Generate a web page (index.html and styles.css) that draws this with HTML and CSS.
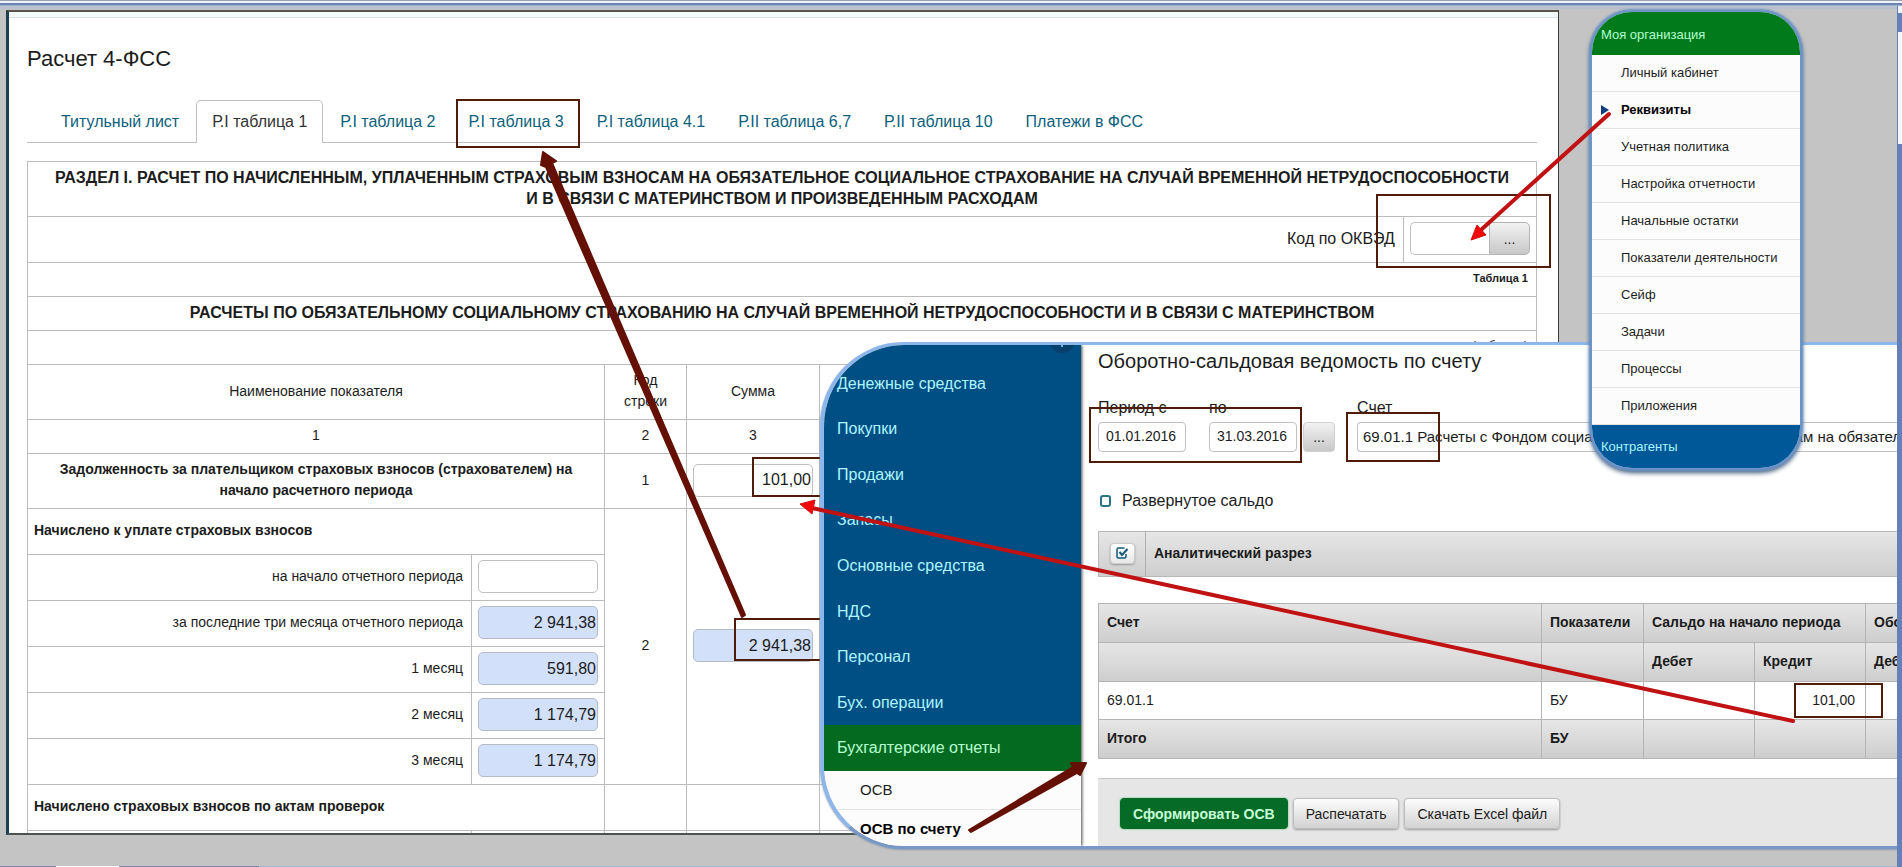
FILE: index.html
```html
<!DOCTYPE html>
<html lang="ru">
<head>
<meta charset="utf-8">
<title>Расчет 4-ФСС</title>
<link rel="stylesheet" href="styles.css">
</head>
<body>
<div class="desktop">
  <div class="top-strip"></div>
  <div class="scrollbar"><span class="scroll-up"></span><span class="scroll-thumb"></span></div>
  <div class="bottom-strip"></div>

  <main class="report">
    <h1 class="report-title">Расчет 4-ФСС</h1>
    <nav class="tabs">
      <a class="tab" href="#t0">Титульный лист</a>
      <a class="tab tab-active" href="#t1" aria-current="page">Р.I таблица 1</a>
      <a class="tab" href="#t2">Р.I таблица 2</a>
      <a class="tab" href="#t3">Р.I таблица 3</a>
      <a class="tab" href="#t4">Р.I таблица 4.1</a>
      <a class="tab" href="#t6">Р.II таблица 6,7</a>
      <a class="tab" href="#t10">Р.II таблица 10</a>
      <a class="tab" href="#pay">Платежи в ФСС</a>
    </nav>
    <table class="form-table">
      <colgroup><col class="c-name"><col class="c-value"><col class="c-code"><col class="c-value"><col><col class="c-value"></colgroup>
      <tbody>
      <tr class="row-double"><th class="heading" colspan="6">РАЗДЕЛ I. РАСЧЕТ ПО НАЧИСЛЕННЫМ, УПЛАЧЕННЫМ СТРАХОВЫМ ВЗНОСАМ НА ОБЯЗАТЕЛЬНОЕ СОЦИАЛЬНОЕ СТРАХОВАНИЕ НА СЛУЧАЙ ВРЕМЕННОЙ НЕТРУДОСПОСОБНОСТИ<br>И В СВЯЗИ С МАТЕРИНСТВОМ И ПРОИЗВЕДЕННЫМ РАСХОДАМ</th></tr>
      <tr class="row-field"><td class="okved-label" colspan="5"><label for="okved">Код по ОКВЭД</label></td>
        <td><div class="picker"><input class="field" id="okved" type="text"><button class="pick" type="button" aria-label="Выбрать код">...</button></div></td></tr>
      <tr class="row-line"><td class="note note-bold" colspan="6">Таблица 1</td></tr>
      <tr class="row-line"><th class="heading" colspan="6">РАСЧЕТЫ ПО ОБЯЗАТЕЛЬНОМУ СОЦИАЛЬНОМУ СТРАХОВАНИЮ НА СЛУЧАЙ ВРЕМЕННОЙ НЕТРУДОСПОСОБНОСТИ И В СВЯЗИ С МАТЕРИНСТВОМ</th></tr>
      <tr class="row-line"><td class="note" colspan="6">(руб. коп.)</td></tr>
      <tr class="row-double"><td class="center" colspan="2">Наименование показателя</td><td class="center">Код строки</td><td class="center">Сумма</td><td colspan="2"></td></tr>
      <tr class="row-line"><td class="center" colspan="2">1</td><td class="center">2</td><td class="center">3</td><td colspan="2"></td></tr>
      <tr class="row-double"><th class="center" colspan="2">Задолженность за плательщиком страховых взносов (страхователем) на<br>начало расчетного периода</th><td class="center">1</td><td><input class="field" type="text" value="101,00" aria-label="Задолженность"></td><td colspan="2"></td></tr>
      <tr class="row-field"><th class="left" colspan="2">Начислено к уплате страховых взносов</th><td class="center" rowspan="6">2</td><td rowspan="6"><input class="field computed" type="text" value="2 941,38" readonly aria-label="Начислено"></td><td colspan="2" rowspan="6"></td></tr>
      <tr class="row-field"><td class="right"><label for="start">на начало отчетного периода</label></td><td><input class="field" id="start" type="text"></td></tr>
      <tr class="row-field"><td class="right"><label for="three">за последние три месяца отчетного периода</label></td><td><input class="field computed" id="three" type="text" value="2 941,38" readonly></td></tr>
      <tr class="row-field"><td class="right"><label for="m1">1 месяц</label></td><td><input class="field computed" id="m1" type="text" value="591,80" readonly></td></tr>
      <tr class="row-field"><td class="right"><label for="m2">2 месяц</label></td><td><input class="field computed" id="m2" type="text" value="1 174,79" readonly></td></tr>
      <tr class="row-field"><td class="right"><label for="m3">3 месяц</label></td><td><input class="field computed" id="m3" type="text" value="1 174,79" readonly></td></tr>
      <tr class="row-field"><th class="left" colspan="2">Начислено страховых взносов по актам проверок</th><td></td><td></td><td colspan="2"></td></tr>
      <tr class="row-field"><td></td><td></td><td></td><td></td><td colspan="2"></td></tr>
      </tbody>
    </table>
  </main>

  <svg class="notes" aria-hidden="true">
    <g class="frame">
      <rect x="457" y="100" width="122" height="47"/>
      <rect x="1377" y="195" width="173" height="72"/>
      <rect x="753" y="458" width="90" height="38"/>
      <rect x="735" y="619" width="100" height="41"/>
    </g>
    <path class="brown" d="M543 152 L556 161 L552 163 L745 615 L742 617 L546 167 L541 165 Z"/>
  </svg>

  <section class="balance">
    <nav class="side">
      <span class="side-knob"></span>
      <div class="side-main">
        <a href="#money">Денежные средства</a>
        <a href="#buy">Покупки</a>
        <a href="#sell">Продажи</a>
        <a href="#stock">Запасы</a>
        <a href="#assets">Основные средства</a>
        <a href="#vat">НДС</a>
        <a href="#staff">Персонал</a>
        <a href="#ops">Бух. операции</a>
        <a class="side-current" href="#reports">Бухгалтерские отчеты</a>
      </div>
      <div class="side-sub">
        <a href="#osv">ОСВ</a>
        <a class="side-sub-current" href="#osv-account">ОСВ по счету</a>
      </div>
    </nav>
    <div class="content">
      <h2 class="content-title">Оборотно-сальдовая ведомость по счету</h2>
      <div class="filters">
        <div class="filter filter-date"><label for="from">Период с</label><input id="from" type="text" value="01.01.2016"></div>
        <div class="filter filter-date"><label for="to">по</label><input id="to" type="text" value="31.03.2016"></div>
        <button class="pick pick-period" type="button" aria-label="Выбрать период">...</button>
        <div class="filter filter-account"><label for="account">Счет</label><input id="account" type="text" value="69.01.1 Расчеты с Фондом социального страхования по взносам на обязательное социальное страхование"></div>
      </div>
      <div class="expand"><input id="expand" type="checkbox"><label for="expand">Развернутое сальдо</label></div>
      <div class="slice">
        <div class="slice-check"><button type="button" aria-label="Аналитический разрез"><svg width="13" height="12" viewBox="0 0 13 12"><path d="M10 7v2.500a1.500 1.500 0 0 1-1.500 1.500h-6A1.500 1.500 0 0 1 1 9.500v-7A1.500 1.500 0 0 1 2.500 1h6" fill="none" stroke="#125a78" stroke-width="1.500"/><path d="M3.500 5l2.500 3 5.500-6" fill="none" stroke="#125a78" stroke-width="2"/></svg></button></div>
        <strong>Аналитический разрез</strong>
      </div>
      <div class="ledger-wrap">
      <table class="ledger">
        <colgroup><col class="l-account"><col class="l-kind"><col class="l-sum"><col class="l-sum"><col class="l-sum"></colgroup>
        <thead>
        <tr><th>Счет</th><th>Показатели</th><th colspan="2">Сальдо на начало периода</th><th>Обороты</th></tr>
        <tr><th></th><th></th><th>Дебет</th><th>Кредит</th><th>Дебет</th></tr>
        </thead>
        <tbody>
        <tr class="plain"><td>69.01.1</td><td>БУ</td><td></td><td class="amount">101,00</td><td></td></tr>
        <tr><th>Итого</th><th>БУ</th><th></th><th></th><th></th></tr>
        </tbody>
      </table>
      </div>
      <div class="actions">
        <button class="btn btn-primary" type="button">Сформировать ОСВ</button>
        <button class="btn" type="button">Распечатать</button>
        <button class="btn" type="button">Скачать Excel файл</button>
      </div>
    </div>
  </section>

  <nav class="org">
    <a class="org-head" href="#org">Моя организация</a>
    <a class="org-item" href="#cabinet">Личный кабинет</a>
    <a class="org-item org-current" href="#details">Реквизиты</a>
    <a class="org-item" href="#policy">Учетная политика</a>
    <a class="org-item" href="#setup">Настройка отчетности</a>
    <a class="org-item" href="#opening">Начальные остатки</a>
    <a class="org-item" href="#metrics">Показатели деятельности</a>
    <a class="org-item" href="#safe">Сейф</a>
    <a class="org-item" href="#tasks">Задачи</a>
    <a class="org-item" href="#processes">Процессы</a>
    <a class="org-item" href="#apps">Приложения</a>
    <a class="org-foot" href="#partners">Контрагенты</a>
  </nav>

  <svg class="notes" aria-hidden="true">
    <g class="frame">
      <rect x="1090" y="408" width="211" height="54"/>
      <rect x="1347" y="413" width="92" height="48"/>
      <rect x="1795" y="684" width="87" height="33"/>
    </g>
    <path class="red-line" d="M1609 114 L1482 229"/>
    <path class="red-head" d="M1471 240 L1477 225 L1486 235 Z"/>
    <path class="red-line" d="M1793 721 L812 508"/>
    <path class="red-head" d="M800 504 L815 500 L812 514 Z"/>
    <path class="brown" d="M969 830 L1073 767 L1071 763 L1086 763 L1080 775 L1077 773 L971 832 Z"/>
  </svg>
</div>
</body>
</html>
```
FILE: styles.css
```css
* { box-sizing: border-box; }
body { margin: 0; font-family: "Liberation Sans", Arial, sans-serif; color: #1c1c1c; }
a { text-decoration: none; color: inherit; }
input, button { font-family: inherit; color: inherit; }

.desktop { position: relative; height: 100vh; overflow: hidden; background: #c4c4c4; }
.top-strip { height: 9px; background: linear-gradient(#9aa2b2 0 1px, #eef3fa 1px 3px, #6d84b0 3px 5px, #9fb0cc 5px 6px, #b9c1cf 6px 9px); }
.bottom-strip { position: absolute; left: 0; right: 0; bottom: 0; height: 1px; background: linear-gradient(90deg, #7f88a8 0 56px, #fff 56px 119px, #7f88a8 119px 259px, #a3b8d8 259px); }
.scrollbar { position: absolute; z-index: 2; top: 6px; right: 0; bottom: 0; width: 5px; background: #6480b8; display: flex; flex-direction: column; gap: 19px; padding-left: 1px; }
.scroll-up { height: 7px; background: #eef4ff; }
.scroll-thumb { height: 112px; background: #f4f8ff; }

/* Report window */
.report { position: absolute; left: 6px; top: 10px; right: 343px; bottom: 32px; overflow: hidden; padding: 33px 21px 0 18px; background: linear-gradient(#f3f9fb 0 5px, #dde3e5 5px 6px, #fff 6px); border: solid #1d4052; border-width: 2px 1px 2px 3px; border-top-color: #55554a; border-right-color: #3c3c38; border-bottom-color: #4a5552; }
.report-title { margin: 0; font-size: 22px; line-height: 28px; font-weight: 400; }
.tabs { display: flex; gap: 1px; margin-top: 27px; padding-left: 18px; border-bottom: 1px solid #c0c0c0; font-size: 16px; line-height: 42px; }
.tab { color: #0d5f7c; padding: 0 15px; border: 1px solid transparent; border-bottom: 0; margin-bottom: -1px; }
.tab-active { color: #333; background: #fff; border-color: #c0c0c0; border-radius: 5px 5px 0 0; }

.form-table { width: 100%; margin-top: 18px; table-layout: fixed; border-collapse: collapse; font-size: 14px; line-height: 21px; }
.form-table td, .form-table th { border: 1px solid #bcbcbc; padding: 0 6px 2px; }
.c-name { width: 444px; }
.c-value { width: 133px; }
.c-code { width: 82px; }
.row-double { height: 55px; }
.row-field { height: 46px; }
.row-line { height: 34px; }
.form-table .heading { font-size: 16px; text-align: center; padding: 0 0 2px; white-space: nowrap; }
.center { text-align: center; }
.left { text-align: left; }
.right { text-align: right; }
.form-table .right { padding-right: 8px; }
.form-table .okved-label { text-align: right; padding-right: 8px; font-size: 16px; }
.form-table .note { text-align: right; font-size: 12px; padding-right: 8px; }
.form-table .note-bold { font-size: 11px; font-weight: 700; }
.field { display: block; width: 100%; height: 33px; padding: 0 1px; border: 1px solid #c0c0c0; border-radius: 5px; background: #fff; font-size: 16px; text-align: right; }
.computed { background: #d3e0fa; border-color: #b5bcc6; }
.picker { display: flex; }
.picker .field { flex: 1; min-width: 0; border-radius: 5px 0 0 5px; border-right: 0; }
.pick { padding: 0; border: 1px solid #b4b4b4; border-radius: 4px; background: linear-gradient(#f2f2f2, #c8c8c8); font-size: 14px; }
.picker .pick { width: 41px; border-radius: 0 5px 5px 0; }

/* Annotations */
.notes { position: absolute; left: 0; top: 0; width: 100%; height: 100%; pointer-events: none; }
.frame rect { fill: none; stroke: #4e1c08; stroke-width: 2; }
.brown { fill: #651004; stroke: #651004; stroke-width: 2; stroke-linejoin: round; }
.red-line { stroke: #c01212; stroke-width: 4; stroke-linecap: round; fill: none; }
.red-head { fill: #f20808; stroke: #d01010; stroke-width: 1; }

/* Balance window */
.balance { position: absolute; left: 820px; top: 342px; right: 5px; bottom: 18px; display: flex; overflow: hidden; border: solid #8db6ea; border-width: 3px 0 3px 4px; border-bottom-color: #7898c8; border-radius: 84px 0 0 84px; background: #fff; box-shadow: 0 1px 2px #8899b0; }
.side { position: relative; width: 257px; flex: none; display: flex; flex-direction: column; background: #fcfcfc; box-shadow: 1px 0 3px #444; }
.side-main { flex: none; display: grid; grid-template-rows: repeat(9, 1fr); height: 426px; padding-top: 16px; background: #004f84; color: #adf5ff; font-size: 16px; }
.side-main a { display: flex; align-items: center; padding-left: 13px; }
.side-main .side-current { background: #046a20; color: #b5ffd0; }
.side-knob { position: absolute; right: 6px; top: -16px; width: 26px; height: 24px; border-radius: 50%; background: #08406c; }
.side-knob::after { content: ""; position: absolute; left: 12px; top: 15px; width: 2px; height: 3px; background: #78b4d8; }
.side-sub { font-size: 15px; }
.side-sub a { display: block; line-height: 38px; padding-left: 36px; border-bottom: 1px solid #e4e4e4; }
.side-sub .side-sub-current { font-weight: 700; border-bottom: 0; color: #000; }

.content { flex: 1; min-width: 0; padding-left: 17px; display: flex; flex-direction: column; }
.content-title { margin: 3px 0 0; font-size: 20px; line-height: 26px; font-weight: 400; }
.filters { display: flex; align-items: flex-end; margin-top: 24px; font-size: 16px; }
.filter { display: flex; flex-direction: column; gap: 4px; line-height: 20px; }
.filter input { width: 100%; height: 30px; border: 1px solid #c0c0c0; border-radius: 4px; padding: 0 6px 2px 7px; font-size: 14px; background: #fff; }
.filter-date { width: 88px; margin-right: 23px; }
.filter-account { flex: 1; min-width: 0; }
.filter-account input { border-right: 0; border-radius: 4px 0 0 4px; padding: 0 0 2px 5px; font-size: 15px; }
.pick-period { width: 32px; height: 30px; margin: 0 22px 0 -17px; border-color: #d0d0d0; }
.expand { display: flex; align-items: center; gap: 11px; margin: 39px 0 0 2px; height: 20px; font-size: 16px; }
.expand input { appearance: none; width: 11px; height: 12px; margin: 0; border: 2px solid #2a7488; border-radius: 3px; background: #fff; }
.slice { display: flex; align-items: stretch; height: 46px; margin-top: 20px; border: 1px solid #b8b8b8; border-right: 0; background: linear-gradient(#e6e6e6, #cecece); font-size: 14px; }
.slice-check { width: 47px; display: grid; place-items: center; border-right: 1px solid #b0b0b0; padding-bottom: 2px; }
.slice-check button { width: 25px; height: 21px; padding: 0; border: 1px solid #ccc; border-radius: 4px; background: linear-gradient(#fff, #e8e8e8); display: grid; place-items: center; box-shadow: 0 1px 2px #999; }
.slice strong { align-self: center; padding: 0 0 2px 8px; }
.ledger-wrap { margin-top: 26px; overflow: hidden; }
.ledger { width: calc(100% + 80px); table-layout: fixed; border-collapse: collapse; font-size: 14px; }
.ledger tr { height: 39px; background: linear-gradient(#e6e6e6, #cdcdcd); }
.ledger .plain { height: 38px; background: #fff; }
.ledger th, .ledger td { padding: 0 8px 2px; border: 1px solid #b4b4b4; text-align: left; white-space: nowrap; overflow: hidden; }
.ledger .amount { text-align: right; padding-right: 10px; }
.l-kind { width: 102px; }
.l-sum { width: 111px; }
.actions { flex: 1; display: flex; gap: 5px; margin-top: 19px; padding: 19px 22px 0; background: #e6e6e6; border-top: 1px solid #c8c8c8; }
.btn { height: 31px; padding: 0 12px; border: 1px solid #bdbdbd; border-radius: 4px; background: linear-gradient(#fdfdfd, #d2d2d2); font-size: 14px; box-shadow: 0 1px 2px #999; }
.btn-primary { border-color: #056b26; background: #056b26; color: #c8ffd8; font-weight: 700; box-shadow: 0 0 2px #4cc070; }

/* Organisation menu */
.org { position: absolute; top: 12px; right: 102px; width: 208px; display: flex; flex-direction: column; overflow: hidden; border-radius: 40px; background: #fcfcfc; box-shadow: 0 0 2px 3px #6c94c8, 0 3px 5px 2px #405878; font-size: 13px; }
.org-head { line-height: 45px; height: 43px; padding-left: 9px; background: #007a1a; color: #b0ffd0; }
.org-item { line-height: 36px; padding-left: 29px; border-bottom: 1px solid #e2e2e2; }
.org-current { font-weight: 700; color: #000; position: relative; }
.org-current::before { content: ""; position: absolute; left: 9px; top: 13px; border: solid transparent; border-width: 5px 0 5px 8px; border-left-color: #123f7c; }
.org-foot { height: 43px; line-height: 43px; padding-left: 9px; background: #005898; color: #a8f5ff; }
```
